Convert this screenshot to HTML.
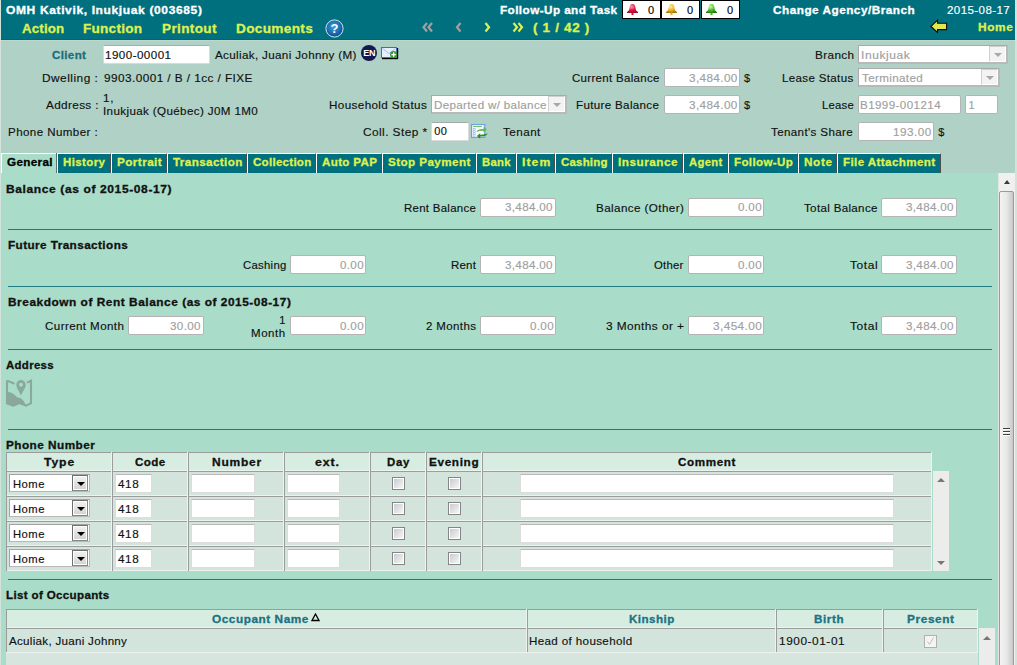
<!DOCTYPE html>
<html><head><meta charset="utf-8"><title>Client</title>
<style>html,body{margin:0;padding:0;overflow:hidden}body{width:1017px;height:665px;position:relative;font-family:"Liberation Sans",sans-serif}</style>
</head><body>
<div style="position:absolute;left:0px;top:0px;width:1017px;height:665px;background:#d3e3dc"></div>
<div style="position:absolute;left:1px;top:0px;width:1014px;height:39px;background:#00707f"></div>
<div style="position:absolute;left:1px;top:39px;width:1014px;height:1px;background:#006676"></div>
<div style="position:absolute;left:1px;top:40px;width:1014px;height:1px;background:#bcd8cc"></div>
<div style="position:absolute;left:1px;top:41px;width:1014px;height:132px;background:#b0d1c5"></div>
<div style="position:absolute;left:1px;top:173px;width:997px;height:492px;background:#a9dcc9"></div>
<div style="position:absolute;left:103px;top:45px;width:105px;height:17px;background:#fff;border:1px solid #dadada;border-top-color:#a9a9a9;border-radius:2px"></div>
<div style="position:absolute;left:664px;top:68px;width:74px;height:17px;background:#fff;border:1px solid #b4b4b4;border-radius:2px"></div>
<div style="position:absolute;left:664px;top:95px;width:74px;height:17px;background:#fff;border:1px solid #b4b4b4;border-radius:2px"></div>
<div style="position:absolute;left:858px;top:95px;width:101px;height:17px;background:#fff;border:1px solid #b4b4b4;border-radius:2px"></div>
<div style="position:absolute;left:965px;top:95px;width:31px;height:17px;background:#fff;border:1px solid #b4b4b4;border-radius:2px"></div>
<div style="position:absolute;left:858px;top:122px;width:74px;height:17px;background:#fff;border:1px solid #b4b4b4;border-radius:2px"></div>
<div style="position:absolute;left:431px;top:122px;width:36px;height:17px;background:#fff;border:1px solid #dadada;border-top-color:#a9a9a9;border-radius:2px"></div>
<div style="position:absolute;left:858px;top:45px;width:147px;height:16px;background:#fff;border:1px solid #a9a9a9;border-right:2px solid #b9b9b9;border-bottom:2px solid #b9b9b9"></div>
<div style="position:absolute;left:989px;top:46px;width:15px;height:14px;background:#f3f3f3;border:1px solid #d0d0d0;border-right-color:#fff;border-bottom-color:#fff"></div>
<div style="position:absolute;left:993.5px;top:52.5px;width:0;height:0;border-left:4px solid transparent;border-right:4px solid transparent;border-top:4px solid #a8a8a8"></div>
<div style="position:absolute;left:858px;top:68px;width:139px;height:16px;background:#fff;border:1px solid #a9a9a9;border-right:2px solid #b9b9b9;border-bottom:2px solid #b9b9b9"></div>
<div style="position:absolute;left:981px;top:69px;width:15px;height:14px;background:#f3f3f3;border:1px solid #d0d0d0;border-right-color:#fff;border-bottom-color:#fff"></div>
<div style="position:absolute;left:985.5px;top:75.5px;width:0;height:0;border-left:4px solid transparent;border-right:4px solid transparent;border-top:4px solid #a8a8a8"></div>
<div style="position:absolute;left:431px;top:95px;width:133px;height:16px;background:#fff;border:1px solid #a9a9a9;border-right:2px solid #b9b9b9;border-bottom:2px solid #b9b9b9"></div>
<div style="position:absolute;left:548px;top:96px;width:15px;height:14px;background:#f3f3f3;border:1px solid #d0d0d0;border-right-color:#fff;border-bottom-color:#fff"></div>
<div style="position:absolute;left:552.5px;top:102.5px;width:0;height:0;border-left:4px solid transparent;border-right:4px solid transparent;border-top:4px solid #a8a8a8"></div>
<div style="position:absolute;left:1px;top:153px;width:56px;height:20px;background:#a9dcc9;border-top:1px solid #fff;border-left:1px solid #fff;box-sizing:border-box"></div>
<div style="position:absolute;left:56px;top:153px;width:1px;height:20px;background:#607070"></div>
<div style="position:absolute;left:57px;top:153px;width:54px;height:20px;background:#00707f;border-top:1px solid #fff;border-left:1px solid #fff;border-right:1px solid #4a5050;box-sizing:border-box"></div>
<div style="position:absolute;left:111px;top:153px;width:56px;height:20px;background:#00707f;border-top:1px solid #fff;border-left:1px solid #fff;border-right:1px solid #4a5050;box-sizing:border-box"></div>
<div style="position:absolute;left:167px;top:153px;width:80px;height:20px;background:#00707f;border-top:1px solid #fff;border-left:1px solid #fff;border-right:1px solid #4a5050;box-sizing:border-box"></div>
<div style="position:absolute;left:247px;top:153px;width:69px;height:20px;background:#00707f;border-top:1px solid #fff;border-left:1px solid #fff;border-right:1px solid #4a5050;box-sizing:border-box"></div>
<div style="position:absolute;left:316px;top:153px;width:66px;height:20px;background:#00707f;border-top:1px solid #fff;border-left:1px solid #fff;border-right:1px solid #4a5050;box-sizing:border-box"></div>
<div style="position:absolute;left:382px;top:153px;width:94px;height:20px;background:#00707f;border-top:1px solid #fff;border-left:1px solid #fff;border-right:1px solid #4a5050;box-sizing:border-box"></div>
<div style="position:absolute;left:476px;top:153px;width:40px;height:20px;background:#00707f;border-top:1px solid #fff;border-left:1px solid #fff;border-right:1px solid #4a5050;box-sizing:border-box"></div>
<div style="position:absolute;left:516px;top:153px;width:39px;height:20px;background:#00707f;border-top:1px solid #fff;border-left:1px solid #fff;border-right:1px solid #4a5050;box-sizing:border-box"></div>
<div style="position:absolute;left:555px;top:153px;width:57px;height:20px;background:#00707f;border-top:1px solid #fff;border-left:1px solid #fff;border-right:1px solid #4a5050;box-sizing:border-box"></div>
<div style="position:absolute;left:612px;top:153px;width:71px;height:20px;background:#00707f;border-top:1px solid #fff;border-left:1px solid #fff;border-right:1px solid #4a5050;box-sizing:border-box"></div>
<div style="position:absolute;left:683px;top:153px;width:45px;height:20px;background:#00707f;border-top:1px solid #fff;border-left:1px solid #fff;border-right:1px solid #4a5050;box-sizing:border-box"></div>
<div style="position:absolute;left:728px;top:153px;width:70px;height:20px;background:#00707f;border-top:1px solid #fff;border-left:1px solid #fff;border-right:1px solid #4a5050;box-sizing:border-box"></div>
<div style="position:absolute;left:798px;top:153px;width:39px;height:20px;background:#00707f;border-top:1px solid #fff;border-left:1px solid #fff;border-right:1px solid #4a5050;box-sizing:border-box"></div>
<div style="position:absolute;left:837px;top:153px;width:104px;height:20px;background:#00707f;border-top:1px solid #fff;border-left:1px solid #fff;border-right:1px solid #4a5050;box-sizing:border-box"></div>
<div style="position:absolute;left:8px;top:229px;width:984px;height:1px;background:#1f7a84"></div>
<div style="position:absolute;left:8px;top:286px;width:984px;height:1px;background:#1f7a84"></div>
<div style="position:absolute;left:8px;top:349px;width:984px;height:1px;background:#1f7a84"></div>
<div style="position:absolute;left:8px;top:429px;width:984px;height:1px;background:#1f7a84"></div>
<div style="position:absolute;left:8px;top:579px;width:984px;height:1px;background:#1f7a84"></div>
<div style="position:absolute;left:480px;top:198px;width:74px;height:17px;background:#fff;border:1px solid #b4b4b4;border-radius:2px"></div>
<div style="position:absolute;left:688px;top:198px;width:74px;height:17px;background:#fff;border:1px solid #b4b4b4;border-radius:2px"></div>
<div style="position:absolute;left:881px;top:198px;width:74px;height:17px;background:#fff;border:1px solid #b4b4b4;border-radius:2px"></div>
<div style="position:absolute;left:290px;top:255px;width:74px;height:17px;background:#fff;border:1px solid #b4b4b4;border-radius:2px"></div>
<div style="position:absolute;left:480px;top:255px;width:74px;height:17px;background:#fff;border:1px solid #b4b4b4;border-radius:2px"></div>
<div style="position:absolute;left:688px;top:255px;width:74px;height:17px;background:#fff;border:1px solid #b4b4b4;border-radius:2px"></div>
<div style="position:absolute;left:881px;top:255px;width:74px;height:17px;background:#fff;border:1px solid #b4b4b4;border-radius:2px"></div>
<div style="position:absolute;left:128px;top:316px;width:74px;height:17px;background:#fff;border:1px solid #b4b4b4;border-radius:2px"></div>
<div style="position:absolute;left:290px;top:316px;width:74px;height:17px;background:#fff;border:1px solid #b4b4b4;border-radius:2px"></div>
<div style="position:absolute;left:480px;top:316px;width:74px;height:17px;background:#fff;border:1px solid #b4b4b4;border-radius:2px"></div>
<div style="position:absolute;left:688px;top:316px;width:74px;height:17px;background:#fff;border:1px solid #b4b4b4;border-radius:2px"></div>
<div style="position:absolute;left:881px;top:316px;width:74px;height:17px;background:#fff;border:1px solid #b4b4b4;border-radius:2px"></div>
<div style="position:absolute;left:6px;top:452px;width:926px;height:19px;background:#d8ede1"></div>
<div style="position:absolute;left:6px;top:471px;width:926px;height:100px;background:#d3e4dd"></div>
<div style="position:absolute;left:6px;top:452px;width:926px;height:1px;background:#9c9c9c"></div>
<div style="position:absolute;left:6px;top:470px;width:926px;height:1px;background:#eef3f0"></div>
<div style="position:absolute;left:6px;top:471px;width:926px;height:1px;background:#9c9c9c"></div>
<div style="position:absolute;left:6px;top:495px;width:926px;height:1px;background:#eef3f0"></div>
<div style="position:absolute;left:6px;top:496px;width:926px;height:1px;background:#9c9c9c"></div>
<div style="position:absolute;left:6px;top:520px;width:926px;height:1px;background:#eef3f0"></div>
<div style="position:absolute;left:6px;top:521px;width:926px;height:1px;background:#9c9c9c"></div>
<div style="position:absolute;left:6px;top:545px;width:926px;height:1px;background:#eef3f0"></div>
<div style="position:absolute;left:6px;top:546px;width:926px;height:1px;background:#9c9c9c"></div>
<div style="position:absolute;left:6px;top:570px;width:926px;height:1px;background:#eef3f0"></div>
<div style="position:absolute;left:6px;top:452px;width:1px;height:119px;background:#9c9c9c"></div>
<div style="position:absolute;left:112px;top:452px;width:1px;height:119px;background:#9c9c9c"></div>
<div style="position:absolute;left:111px;top:452px;width:1px;height:119px;background:#eef3f0"></div>
<div style="position:absolute;left:188px;top:452px;width:1px;height:119px;background:#9c9c9c"></div>
<div style="position:absolute;left:187px;top:452px;width:1px;height:119px;background:#eef3f0"></div>
<div style="position:absolute;left:284px;top:452px;width:1px;height:119px;background:#9c9c9c"></div>
<div style="position:absolute;left:283px;top:452px;width:1px;height:119px;background:#eef3f0"></div>
<div style="position:absolute;left:370px;top:452px;width:1px;height:119px;background:#9c9c9c"></div>
<div style="position:absolute;left:369px;top:452px;width:1px;height:119px;background:#eef3f0"></div>
<div style="position:absolute;left:426px;top:452px;width:1px;height:119px;background:#9c9c9c"></div>
<div style="position:absolute;left:425px;top:452px;width:1px;height:119px;background:#eef3f0"></div>
<div style="position:absolute;left:482px;top:452px;width:1px;height:119px;background:#9c9c9c"></div>
<div style="position:absolute;left:481px;top:452px;width:1px;height:119px;background:#eef3f0"></div>
<div style="position:absolute;left:931px;top:452px;width:1px;height:119px;background:#eef3f0"></div>
<div style="position:absolute;left:9px;top:474px;width:79px;height:16px;background:#fff;border:1px solid #a4a4a4;border-right-color:#b8b8b8;border-bottom-color:#b8b8b8"></div>
<div style="position:absolute;left:72px;top:475px;width:14px;height:14px;border:1px solid #6e6e6e;border-right-color:#888;border-bottom-color:#888;background:linear-gradient(#f2f2f2,#d2d2d2);box-shadow:inset 0 0 0 1px #fff"></div>
<div style="position:absolute;left:77px;top:482px;width:0;height:0;border-left:4px solid transparent;border-right:4px solid transparent;border-top:4px solid #000"></div>
<div style="position:absolute;left:115px;top:474px;width:35px;height:17px;background:#fff;border:1px solid #dcdcdc;border-top-color:#b8b8b8;border-radius:1px"></div>
<div style="position:absolute;left:191px;top:474px;width:62px;height:17px;background:#fff;border:1px solid #dcdcdc;border-top-color:#b8b8b8;border-radius:1px"></div>
<div style="position:absolute;left:287px;top:474px;width:51px;height:17px;background:#fff;border:1px solid #dcdcdc;border-top-color:#b8b8b8;border-radius:1px"></div>
<div style="position:absolute;left:520px;top:474px;width:372px;height:17px;background:#fff;border:1px solid #dcdcdc;border-top-color:#b8b8b8;border-radius:1px"></div>
<div style="position:absolute;left:392px;top:477px;width:11px;height:11px;border:1px solid #858585;background:linear-gradient(135deg,#c4c6cc,#fbfbfb);box-shadow:inset 0 0 0 1px #fff"></div>
<div style="position:absolute;left:448px;top:477px;width:11px;height:11px;border:1px solid #858585;background:linear-gradient(135deg,#c4c6cc,#fbfbfb);box-shadow:inset 0 0 0 1px #fff"></div>
<div style="position:absolute;left:9px;top:499px;width:79px;height:16px;background:#fff;border:1px solid #a4a4a4;border-right-color:#b8b8b8;border-bottom-color:#b8b8b8"></div>
<div style="position:absolute;left:72px;top:500px;width:14px;height:14px;border:1px solid #6e6e6e;border-right-color:#888;border-bottom-color:#888;background:linear-gradient(#f2f2f2,#d2d2d2);box-shadow:inset 0 0 0 1px #fff"></div>
<div style="position:absolute;left:77px;top:507px;width:0;height:0;border-left:4px solid transparent;border-right:4px solid transparent;border-top:4px solid #000"></div>
<div style="position:absolute;left:115px;top:499px;width:35px;height:17px;background:#fff;border:1px solid #dcdcdc;border-top-color:#b8b8b8;border-radius:1px"></div>
<div style="position:absolute;left:191px;top:499px;width:62px;height:17px;background:#fff;border:1px solid #dcdcdc;border-top-color:#b8b8b8;border-radius:1px"></div>
<div style="position:absolute;left:287px;top:499px;width:51px;height:17px;background:#fff;border:1px solid #dcdcdc;border-top-color:#b8b8b8;border-radius:1px"></div>
<div style="position:absolute;left:520px;top:499px;width:372px;height:17px;background:#fff;border:1px solid #dcdcdc;border-top-color:#b8b8b8;border-radius:1px"></div>
<div style="position:absolute;left:392px;top:502px;width:11px;height:11px;border:1px solid #858585;background:linear-gradient(135deg,#c4c6cc,#fbfbfb);box-shadow:inset 0 0 0 1px #fff"></div>
<div style="position:absolute;left:448px;top:502px;width:11px;height:11px;border:1px solid #858585;background:linear-gradient(135deg,#c4c6cc,#fbfbfb);box-shadow:inset 0 0 0 1px #fff"></div>
<div style="position:absolute;left:9px;top:524px;width:79px;height:16px;background:#fff;border:1px solid #a4a4a4;border-right-color:#b8b8b8;border-bottom-color:#b8b8b8"></div>
<div style="position:absolute;left:72px;top:525px;width:14px;height:14px;border:1px solid #6e6e6e;border-right-color:#888;border-bottom-color:#888;background:linear-gradient(#f2f2f2,#d2d2d2);box-shadow:inset 0 0 0 1px #fff"></div>
<div style="position:absolute;left:77px;top:532px;width:0;height:0;border-left:4px solid transparent;border-right:4px solid transparent;border-top:4px solid #000"></div>
<div style="position:absolute;left:115px;top:524px;width:35px;height:17px;background:#fff;border:1px solid #dcdcdc;border-top-color:#b8b8b8;border-radius:1px"></div>
<div style="position:absolute;left:191px;top:524px;width:62px;height:17px;background:#fff;border:1px solid #dcdcdc;border-top-color:#b8b8b8;border-radius:1px"></div>
<div style="position:absolute;left:287px;top:524px;width:51px;height:17px;background:#fff;border:1px solid #dcdcdc;border-top-color:#b8b8b8;border-radius:1px"></div>
<div style="position:absolute;left:520px;top:524px;width:372px;height:17px;background:#fff;border:1px solid #dcdcdc;border-top-color:#b8b8b8;border-radius:1px"></div>
<div style="position:absolute;left:392px;top:527px;width:11px;height:11px;border:1px solid #858585;background:linear-gradient(135deg,#c4c6cc,#fbfbfb);box-shadow:inset 0 0 0 1px #fff"></div>
<div style="position:absolute;left:448px;top:527px;width:11px;height:11px;border:1px solid #858585;background:linear-gradient(135deg,#c4c6cc,#fbfbfb);box-shadow:inset 0 0 0 1px #fff"></div>
<div style="position:absolute;left:9px;top:549px;width:79px;height:16px;background:#fff;border:1px solid #a4a4a4;border-right-color:#b8b8b8;border-bottom-color:#b8b8b8"></div>
<div style="position:absolute;left:72px;top:550px;width:14px;height:14px;border:1px solid #6e6e6e;border-right-color:#888;border-bottom-color:#888;background:linear-gradient(#f2f2f2,#d2d2d2);box-shadow:inset 0 0 0 1px #fff"></div>
<div style="position:absolute;left:77px;top:557px;width:0;height:0;border-left:4px solid transparent;border-right:4px solid transparent;border-top:4px solid #000"></div>
<div style="position:absolute;left:115px;top:549px;width:35px;height:17px;background:#fff;border:1px solid #dcdcdc;border-top-color:#b8b8b8;border-radius:1px"></div>
<div style="position:absolute;left:191px;top:549px;width:62px;height:17px;background:#fff;border:1px solid #dcdcdc;border-top-color:#b8b8b8;border-radius:1px"></div>
<div style="position:absolute;left:287px;top:549px;width:51px;height:17px;background:#fff;border:1px solid #dcdcdc;border-top-color:#b8b8b8;border-radius:1px"></div>
<div style="position:absolute;left:520px;top:549px;width:372px;height:17px;background:#fff;border:1px solid #dcdcdc;border-top-color:#b8b8b8;border-radius:1px"></div>
<div style="position:absolute;left:392px;top:552px;width:11px;height:11px;border:1px solid #858585;background:linear-gradient(135deg,#c4c6cc,#fbfbfb);box-shadow:inset 0 0 0 1px #fff"></div>
<div style="position:absolute;left:448px;top:552px;width:11px;height:11px;border:1px solid #858585;background:linear-gradient(135deg,#c4c6cc,#fbfbfb);box-shadow:inset 0 0 0 1px #fff"></div>
<div style="position:absolute;left:933px;top:471px;width:16px;height:100px;background:#ececec"></div>
<div style="position:absolute;left:937px;top:478px;width:0;height:0;border-left:4px solid transparent;border-right:4px solid transparent;border-bottom:4px solid #777"></div>
<div style="position:absolute;left:937px;top:561px;width:0;height:0;border-left:4px solid transparent;border-right:4px solid transparent;border-top:4px solid #777"></div>
<div style="position:absolute;left:6px;top:609px;width:972px;height:19px;background:#d8ede1"></div>
<div style="position:absolute;left:6px;top:628px;width:972px;height:24px;background:#d3e4dd"></div>
<div style="position:absolute;left:6px;top:652px;width:972px;height:13px;background:#d7e5df"></div>
<div style="position:absolute;left:6px;top:609px;width:972px;height:1px;background:#9c9c9c"></div>
<div style="position:absolute;left:6px;top:627px;width:972px;height:1px;background:#eef3f0"></div>
<div style="position:absolute;left:6px;top:628px;width:972px;height:1px;background:#9c9c9c"></div>
<div style="position:absolute;left:6px;top:652px;width:972px;height:1px;background:#eef3f0"></div>
<div style="position:absolute;left:6px;top:609px;width:1px;height:43px;background:#9c9c9c"></div>
<div style="position:absolute;left:527px;top:609px;width:1px;height:43px;background:#9c9c9c"></div>
<div style="position:absolute;left:526px;top:609px;width:1px;height:43px;background:#eef3f0"></div>
<div style="position:absolute;left:776px;top:609px;width:1px;height:43px;background:#9c9c9c"></div>
<div style="position:absolute;left:775px;top:609px;width:1px;height:43px;background:#eef3f0"></div>
<div style="position:absolute;left:883px;top:609px;width:1px;height:43px;background:#9c9c9c"></div>
<div style="position:absolute;left:882px;top:609px;width:1px;height:43px;background:#eef3f0"></div>
<div style="position:absolute;left:977px;top:609px;width:1px;height:43px;background:#eef3f0"></div>
<svg style="position:absolute;left:311px;top:613px" width="9" height="9"><path d="M4.5 1 L8 7.5 L1 7.5 Z" fill="none" stroke="#000" stroke-width="1.3"/></svg>
<div style="position:absolute;left:924px;top:635px;width:11px;height:11px;border:1px solid #b0b0b0;background:#f4f4f4"></div>
<svg style="position:absolute;left:924px;top:635px" width="13" height="13"><path d="M3.5 6.5 L5.5 9.5 L9.5 2.5" fill="none" stroke="#c0c0c0" stroke-width="1"/></svg>
<div style="position:absolute;left:979px;top:628px;width:16px;height:37px;background:#ececec"></div>
<div style="position:absolute;left:983px;top:636px;width:0;height:0;border-left:4px solid transparent;border-right:4px solid transparent;border-bottom:4px solid #777"></div>
<div style="position:absolute;left:998px;top:173px;width:17px;height:492px;background:#f0f0f0;border-left:1px solid #e4e4e4;box-sizing:border-box"></div>
<div style="position:absolute;left:1004px;top:180px;width:0;height:0;border-left:3.5px solid transparent;border-right:3.5px solid transparent;border-bottom:4px solid #3a3a3a"></div>
<div style="position:absolute;left:999px;top:191px;width:15px;height:480px;box-sizing:border-box;border:1px solid #9a9a9a;border-radius:2px;background:linear-gradient(90deg,#f4f4f4,#e8e8e8 50%,#c8c8c8)"></div>
<div style="position:absolute;left:1003px;top:428px;width:7px;height:1px;background:#404040"></div>
<div style="position:absolute;left:1003px;top:429px;width:7px;height:1px;background:#fff"></div>
<div style="position:absolute;left:1003px;top:431px;width:7px;height:1px;background:#404040"></div>
<div style="position:absolute;left:1003px;top:432px;width:7px;height:1px;background:#fff"></div>
<div style="position:absolute;left:1003px;top:434px;width:7px;height:1px;background:#404040"></div>
<div style="position:absolute;left:1003px;top:435px;width:7px;height:1px;background:#fff"></div>
<svg style="position:absolute;left:325px;top:19px" width="19" height="19"><defs><radialGradient id="hg" cx="45%" cy="40%" r="60%"><stop offset="0" stop-color="#3aa0dc"/><stop offset="1" stop-color="#0a4f98"/></radialGradient></defs><circle cx="9.5" cy="9.5" r="8.6" fill="url(#hg)" stroke="#cfe6f2" stroke-width="1"/><text x="9.6" y="14.4" text-anchor="middle" font-family="Liberation Sans" font-weight="bold" font-size="13" fill="#fff">?</text></svg>
<svg style="position:absolute;left:361px;top:45px" width="17" height="17"><circle cx="8" cy="8" r="8" fill="#161650"/><text x="8.2" y="11.3" text-anchor="middle" font-family="Liberation Sans" font-weight="bold" font-size="9" letter-spacing="-0.3" fill="#fff">EN</text></svg>
<svg style="position:absolute;left:381px;top:46px" width="18" height="15"><rect x="0.5" y="1.5" width="15" height="10" fill="#e4efff" stroke="#3c70c8"/><path d="M1.5 2.5 L8 7.5 L14.5 2.5" stroke="#9fbfe8" fill="none"/><rect x="1" y="12" width="16" height="1.2" fill="#000"/><rect x="16" y="2" width="1.2" height="11" fill="#000"/><circle cx="12.6" cy="8.6" r="3.6" fill="#3a9a2e"/><rect x="12" y="6.4" width="1.3" height="4.4" fill="#fff"/><rect x="10.4" y="8" width="4.4" height="1.3" fill="#fff"/></svg>
<svg style="position:absolute;left:465px;top:118px" width="30" height="26"><rect x="6.6" y="6.6" width="13.2" height="12.8" fill="#fff" stroke="#6f9fe0" stroke-width="1.2"/><path d="M8 8.5 H17" stroke="#6cc46c" stroke-width="1"/><rect x="8" y="10" width="2.6" height="8.6" fill="#a8c4ee"/><rect x="8.8" y="11" width="1" height="1" fill="#fff"/><rect x="8.8" y="13" width="1" height="1" fill="#fff"/><rect x="8.8" y="15" width="1" height="1" fill="#fff"/><rect x="8.8" y="17" width="1" height="1" fill="#fff"/><path d="M11 14 C13 11.2 16 10.8 18.5 11.2 L18.5 8.8 L21.8 11.6 L18.5 14.4 L18.5 12.9 C16 12.7 13.5 13.2 11 14 Z" fill="#56bb56"/><path d="M22.8 15.6 C20.8 18.6 17.8 18.8 15.2 18.4 L15.2 20.8 L11.8 18 L15.2 15.2 L15.2 16.7 C17.6 16.9 20.2 16.4 22.8 15.6 Z" fill="#2a8c2a"/></svg>
<svg style="position:absolute;left:930px;top:19px" width="19" height="15"><path d="M1 7.4 L7.5 1.2 L7.5 4.3 L16.6 4.3 L16.6 10.6 L7.5 10.6 L7.5 13.5 Z" fill="#dfe94f" stroke="#1a0a0a" stroke-width="1.1"/></svg>
<div style="position:absolute;left:622px;top:0px;width:37px;height:17px;background:#fff;border:1px solid #000"></div>
<svg style="position:absolute;left:626px;top:3px" width="13" height="12"><defs><radialGradient id="bg0" cx="40%" cy="30%" r="70%"><stop offset="0" stop-color="#ff9ab0"/><stop offset="0.6" stop-color="#e0103c"/><stop offset="1" stop-color="#a0102a"/></radialGradient></defs><path d="M6.5 1 C4.3 1 3.7 3 3.5 5 C3.3 7 2.6 8 1 9.1 L1 10 H12 V9.1 C10.4 8 9.7 7 9.5 5 C9.3 3 8.7 1 6.5 1 Z" fill="url(#bg0)"/><circle cx="6.5" cy="10.9" r="1.2" fill="#e0103c"/></svg>
<div style="position:absolute;left:661px;top:0px;width:37px;height:17px;background:#fff;border:1px solid #000"></div>
<svg style="position:absolute;left:665px;top:3px" width="13" height="12"><defs><radialGradient id="bg1" cx="40%" cy="30%" r="70%"><stop offset="0" stop-color="#fff0a0"/><stop offset="0.6" stop-color="#e8b020"/><stop offset="1" stop-color="#a87810"/></radialGradient></defs><path d="M6.5 1 C4.3 1 3.7 3 3.5 5 C3.3 7 2.6 8 1 9.1 L1 10 H12 V9.1 C10.4 8 9.7 7 9.5 5 C9.3 3 8.7 1 6.5 1 Z" fill="url(#bg1)"/><circle cx="6.5" cy="10.9" r="1.2" fill="#e8b020"/></svg>
<div style="position:absolute;left:701px;top:0px;width:37px;height:17px;background:#fff;border:1px solid #000"></div>
<svg style="position:absolute;left:705px;top:3px" width="13" height="12"><defs><radialGradient id="bg2" cx="40%" cy="30%" r="70%"><stop offset="0" stop-color="#c8ffa8"/><stop offset="0.6" stop-color="#48b828"/><stop offset="1" stop-color="#2a7a18"/></radialGradient></defs><path d="M6.5 1 C4.3 1 3.7 3 3.5 5 C3.3 7 2.6 8 1 9.1 L1 10 H12 V9.1 C10.4 8 9.7 7 9.5 5 C9.3 3 8.7 1 6.5 1 Z" fill="url(#bg2)"/><circle cx="6.5" cy="10.9" r="1.2" fill="#48b828"/></svg>
<svg style="position:absolute;left:422px;top:22px" width="12" height="11"><path d="M5 1 L1.5 5.2 L5 9.5 M10 1 L6.5 5.2 L10 9.5" fill="none" stroke="#a0a0a0" stroke-width="2.2"/></svg>
<svg style="position:absolute;left:455px;top:22px" width="8" height="11"><path d="M5.5 1 L2 5.2 L5.5 9.5" fill="none" stroke="#a0a0a0" stroke-width="2.2"/></svg>
<svg style="position:absolute;left:484px;top:22px" width="8" height="11"><path d="M1.5 1 L5 5.2 L1.5 9.5" fill="none" stroke="#def04e" stroke-width="2.2"/></svg>
<svg style="position:absolute;left:512px;top:22px" width="12" height="11"><path d="M1.5 1 L5 5.2 L1.5 9.5 M6.5 1 L10 5.2 L6.5 9.5" fill="none" stroke="#def04e" stroke-width="2.2"/></svg>
<svg style="position:absolute;left:0;top:372px" width="40" height="40"><g fill="none" stroke="#8aa89e" stroke-width="2.1" stroke-linejoin="miter"><path d="M7 8.6 L7 31.2 L13 33.6 L19.5 31 L26 33.6 L31 31.2 L31 8.6 L27 10.6"/><path d="M7 8.6 L14.5 11.8"/></g><path d="M6 19.6 C10 20 14 21.5 17 25.2 C20.5 25.6 23.5 27.5 25 31.6 L26 33.6 L19.5 31 L13 33.6 L6 31.2 Z" fill="#8aa89e"/><path d="M21 24.5 C19.2 20 15.2 16.5 15.2 12.7 A5.8 5.8 0 1 1 26.8 12.7 C26.8 16.5 22.8 20 21 24.5 Z" fill="#a9dcc9"/><path fill-rule="evenodd" d="M21 23.4 C19.5 19.5 16.3 16.2 16.3 12.7 A4.7 4.7 0 1 1 25.7 12.7 C25.7 16.2 22.5 19.5 21 23.4 Z M21 10.8 A1.9 1.9 0 1 0 21.01 10.8 Z" fill="#8aa89e"/></svg>
<span style="position:absolute;left:6.00px;top:5px;white-space:nowrap;font-family:'Liberation Sans',sans-serif;font-size:11px;font-weight:bold;line-height:11px;letter-spacing:0.578px;color:#fff;transform:scaleX(1.0922);transform-origin:0 0;-webkit-text-stroke:0.3px currentColor">OMH Kativik, Inukjuak (003685)</span>
<span style="position:absolute;left:21.70px;top:22px;white-space:nowrap;font-family:'Liberation Sans',sans-serif;font-size:13px;font-weight:bold;line-height:13px;letter-spacing:0.18px;color:#def04e;transform:scaleX(1.0195);transform-origin:0 0;-webkit-text-stroke:0.3px currentColor">Action</span>
<span style="position:absolute;left:83.36px;top:22px;white-space:nowrap;font-family:'Liberation Sans',sans-serif;font-size:13px;font-weight:bold;line-height:13px;letter-spacing:0.243px;color:#def04e;transform:scaleX(1.0436);transform-origin:0 0;-webkit-text-stroke:0.3px currentColor">Function</span>
<span style="position:absolute;left:161.76px;top:22px;white-space:nowrap;font-family:'Liberation Sans',sans-serif;font-size:13px;font-weight:bold;line-height:13px;letter-spacing:0.364px;color:#def04e;transform:scaleX(1.0404);transform-origin:0 0;-webkit-text-stroke:0.3px currentColor">Printout</span>
<span style="position:absolute;left:236.45px;top:22px;white-space:nowrap;font-family:'Liberation Sans',sans-serif;font-size:13px;font-weight:bold;line-height:13px;letter-spacing:0.331px;color:#def04e;transform:scaleX(1.0458);transform-origin:0 0;-webkit-text-stroke:0.3px currentColor">Documents</span>
<span style="position:absolute;left:500.20px;top:5px;white-space:nowrap;font-family:'Liberation Sans',sans-serif;font-size:11px;font-weight:bold;line-height:11px;letter-spacing:0.412px;color:#fff;transform:scaleX(1.0636);transform-origin:0 0;-webkit-text-stroke:0.3px currentColor">Follow-Up and Task</span>
<span style="position:absolute;left:773.10px;top:5px;white-space:nowrap;font-family:'Liberation Sans',sans-serif;font-size:11px;font-weight:bold;line-height:11px;letter-spacing:0.474px;color:#fff;transform:scaleX(1.0682);transform-origin:0 0;-webkit-text-stroke:0.3px currentColor">Change Agency/Branch</span>
<span style="position:absolute;left:946.50px;top:5px;white-space:nowrap;font-family:'Liberation Sans',sans-serif;font-size:11px;font-weight:normal;line-height:11px;letter-spacing:0.389px;color:#fff;transform:scaleX(1.0500);transform-origin:0 0;-webkit-text-stroke:0.15px currentColor">2015-08-17</span>
<span style="position:absolute;left:977.80px;top:22px;white-space:nowrap;font-family:'Liberation Sans',sans-serif;font-size:11px;font-weight:bold;line-height:11px;letter-spacing:0.583px;color:#def04e;transform:scaleX(1.0781);transform-origin:0 0;-webkit-text-stroke:0.3px currentColor">Home</span>
<span style="position:absolute;left:533.30px;top:22px;white-space:nowrap;font-family:'Liberation Sans',sans-serif;font-size:12px;font-weight:bold;line-height:12px;letter-spacing:0.611px;color:#def04e;transform:scaleX(1.1200);transform-origin:0 0;-webkit-text-stroke:0.3px currentColor">( 1 / 42 )</span>
<span style="position:absolute;left:51.90px;top:50px;white-space:nowrap;font-family:'Liberation Sans',sans-serif;font-size:11px;font-weight:bold;line-height:11px;letter-spacing:0.36px;color:#1b6f7e;transform:scaleX(1.0485);transform-origin:0 0;-webkit-text-stroke:0.3px currentColor">Client</span>
<span style="position:absolute;left:215.10px;top:50px;white-space:nowrap;font-family:'Liberation Sans',sans-serif;font-size:11px;font-weight:normal;line-height:11px;letter-spacing:0.312px;color:#111;transform:scaleX(1.0602);transform-origin:0 0;-webkit-text-stroke:0.15px currentColor">Aculiak, Juani Johnny (M)</span>
<span style="position:absolute;left:42.22px;top:73px;white-space:nowrap;font-family:'Liberation Sans',sans-serif;font-size:11px;font-weight:normal;line-height:11px;letter-spacing:0.444px;color:#111;transform:scaleX(1.0800);transform-origin:0 0;-webkit-text-stroke:0.15px currentColor">Dwelling :</span>
<span style="position:absolute;left:104.00px;top:73px;white-space:nowrap;font-family:'Liberation Sans',sans-serif;font-size:11px;font-weight:normal;line-height:11px;letter-spacing:0.4px;color:#111;transform:scaleX(1.0725);transform-origin:0 0;-webkit-text-stroke:0.15px currentColor">9903.0001 / B / 1cc / FIXE</span>
<span style="position:absolute;left:46.00px;top:100px;white-space:nowrap;font-family:'Liberation Sans',sans-serif;font-size:11px;font-weight:normal;line-height:11px;letter-spacing:0.331px;color:#111;transform:scaleX(1.0687);transform-origin:0 0;-webkit-text-stroke:0.15px currentColor">Address :</span>
<span style="position:absolute;left:103.04px;top:93px;white-space:nowrap;font-family:'Liberation Sans',sans-serif;font-size:11px;font-weight:normal;line-height:11px;letter-spacing:0.75px;color:#111;transform:scaleX(1.0625);transform-origin:0 0;-webkit-text-stroke:0.15px currentColor">1,</span>
<span style="position:absolute;left:102.95px;top:106px;white-space:nowrap;font-family:'Liberation Sans',sans-serif;font-size:11px;font-weight:normal;line-height:11px;letter-spacing:0.354px;color:#111;transform:scaleX(1.0548);transform-origin:0 0;-webkit-text-stroke:0.15px currentColor">Inukjuak (Québec) J0M 1M0</span>
<span style="position:absolute;left:7.95px;top:127px;white-space:nowrap;font-family:'Liberation Sans',sans-serif;font-size:11px;font-weight:normal;line-height:11px;letter-spacing:0.396px;color:#111;transform:scaleX(1.0512);transform-origin:0 0;-webkit-text-stroke:0.15px currentColor">Phone Number :</span>
<span style="position:absolute;left:328.74px;top:100px;white-space:nowrap;font-family:'Liberation Sans',sans-serif;font-size:11px;font-weight:normal;line-height:11px;letter-spacing:0.353px;color:#111;transform:scaleX(1.0615);transform-origin:0 0;-webkit-text-stroke:0.15px currentColor">Household Status</span>
<span style="position:absolute;left:362.70px;top:127px;white-space:nowrap;font-family:'Liberation Sans',sans-serif;font-size:11px;font-weight:normal;line-height:11px;letter-spacing:0.395px;color:#111;transform:scaleX(1.0797);transform-origin:0 0;-webkit-text-stroke:0.15px currentColor">Coll. Step *</span>
<span style="position:absolute;left:503.40px;top:127px;white-space:nowrap;font-family:'Liberation Sans',sans-serif;font-size:11px;font-weight:normal;line-height:11px;letter-spacing:0.42px;color:#111;transform:scaleX(1.0629);transform-origin:0 0;-webkit-text-stroke:0.15px currentColor">Tenant</span>
<span style="position:absolute;left:571.90px;top:73px;white-space:nowrap;font-family:'Liberation Sans',sans-serif;font-size:11px;font-weight:normal;line-height:11px;letter-spacing:0.307px;color:#111;transform:scaleX(1.0429);transform-origin:0 0;-webkit-text-stroke:0.15px currentColor">Current Balance</span>
<span style="position:absolute;left:576.25px;top:100px;white-space:nowrap;font-family:'Liberation Sans',sans-serif;font-size:11px;font-weight:normal;line-height:11px;letter-spacing:0.315px;color:#111;transform:scaleX(1.0538);transform-origin:0 0;-webkit-text-stroke:0.15px currentColor">Future Balance</span>
<span style="position:absolute;left:744.00px;top:73px;white-space:nowrap;font-family:'Liberation Sans',sans-serif;font-size:11px;font-weight:normal;line-height:11px;letter-spacing:0.0px;color:#111;transform:scaleX(1.0000);transform-origin:0 0;-webkit-text-stroke:0.15px currentColor">$</span>
<span style="position:absolute;left:744.00px;top:100px;white-space:nowrap;font-family:'Liberation Sans',sans-serif;font-size:11px;font-weight:normal;line-height:11px;letter-spacing:0.0px;color:#111;transform:scaleX(1.0000);transform-origin:0 0;-webkit-text-stroke:0.15px currentColor">$</span>
<span style="position:absolute;left:815.03px;top:50px;white-space:nowrap;font-family:'Liberation Sans',sans-serif;font-size:11px;font-weight:normal;line-height:11px;letter-spacing:0.34px;color:#111;transform:scaleX(1.0686);transform-origin:0 0;-webkit-text-stroke:0.15px currentColor">Branch</span>
<span style="position:absolute;left:782.15px;top:73px;white-space:nowrap;font-family:'Liberation Sans',sans-serif;font-size:11px;font-weight:normal;line-height:11px;letter-spacing:0.332px;color:#111;transform:scaleX(1.0493);transform-origin:0 0;-webkit-text-stroke:0.15px currentColor">Lease Status</span>
<span style="position:absolute;left:821.67px;top:100px;white-space:nowrap;font-family:'Liberation Sans',sans-serif;font-size:11px;font-weight:normal;line-height:11px;letter-spacing:0.225px;color:#111;transform:scaleX(1.0267);transform-origin:0 0;-webkit-text-stroke:0.15px currentColor">Lease</span>
<span style="position:absolute;left:771.40px;top:127px;white-space:nowrap;font-family:'Liberation Sans',sans-serif;font-size:11px;font-weight:normal;line-height:11px;letter-spacing:0.35px;color:#111;transform:scaleX(1.0526);transform-origin:0 0;-webkit-text-stroke:0.15px currentColor">Tenant's Share</span>
<span style="position:absolute;left:938.20px;top:127px;white-space:nowrap;font-family:'Liberation Sans',sans-serif;font-size:11px;font-weight:normal;line-height:11px;letter-spacing:0.0px;color:#111;transform:scaleX(1.0000);transform-origin:0 0;-webkit-text-stroke:0.15px currentColor">$</span>
<span style="position:absolute;left:105.34px;top:50px;white-space:nowrap;font-family:'Liberation Sans',sans-serif;font-size:11px;font-weight:normal;line-height:11px;letter-spacing:0.417px;color:#111;transform:scaleX(1.0574);transform-origin:0 0;-webkit-text-stroke:0.15px currentColor">1900-00001</span>
<span style="position:absolute;left:689.00px;top:73px;white-space:nowrap;font-family:'Liberation Sans',sans-serif;font-size:11px;font-weight:normal;line-height:11px;letter-spacing:0.357px;color:#a0a0a0;transform:scaleX(1.0667);transform-origin:0 0;-webkit-text-stroke:0.15px currentColor">3,484.00</span>
<span style="position:absolute;left:689.00px;top:100px;white-space:nowrap;font-family:'Liberation Sans',sans-serif;font-size:11px;font-weight:normal;line-height:11px;letter-spacing:0.357px;color:#a0a0a0;transform:scaleX(1.0667);transform-origin:0 0;-webkit-text-stroke:0.15px currentColor">3,484.00</span>
<span style="position:absolute;left:860.05px;top:100px;white-space:nowrap;font-family:'Liberation Sans',sans-serif;font-size:11px;font-weight:normal;line-height:11px;letter-spacing:0.405px;color:#a0a0a0;transform:scaleX(1.0513);transform-origin:0 0;-webkit-text-stroke:0.15px currentColor">B1999-001214</span>
<span style="position:absolute;left:968.50px;top:100px;white-space:nowrap;font-family:'Liberation Sans',sans-serif;font-size:11px;font-weight:normal;line-height:11px;letter-spacing:0.0px;color:#a0a0a0;transform:scaleX(1.0000);transform-origin:0 0;-webkit-text-stroke:0.15px currentColor">1</span>
<span style="position:absolute;left:892.93px;top:127px;white-space:nowrap;font-family:'Liberation Sans',sans-serif;font-size:11px;font-weight:normal;line-height:11px;letter-spacing:0.43px;color:#a0a0a0;transform:scaleX(1.0657);transform-origin:0 0;-webkit-text-stroke:0.15px currentColor">193.00</span>
<span style="position:absolute;left:434.20px;top:126px;white-space:nowrap;font-family:'Liberation Sans',sans-serif;font-size:11px;font-weight:normal;line-height:11px;letter-spacing:0.5px;color:#111;transform:scaleX(1.0000);transform-origin:0 0;-webkit-text-stroke:0.15px currentColor">00</span>
<span style="position:absolute;left:860.71px;top:50px;white-space:nowrap;font-family:'Liberation Sans',sans-serif;font-size:11px;font-weight:normal;line-height:11px;letter-spacing:0.557px;color:#a0a0a0;transform:scaleX(1.0864);transform-origin:0 0;-webkit-text-stroke:0.15px currentColor">Inukjuak</span>
<span style="position:absolute;left:862.30px;top:73px;white-space:nowrap;font-family:'Liberation Sans',sans-serif;font-size:11px;font-weight:normal;line-height:11px;letter-spacing:0.344px;color:#a0a0a0;transform:scaleX(1.0561);transform-origin:0 0;-webkit-text-stroke:0.15px currentColor">Terminated</span>
<span style="position:absolute;left:433.94px;top:100px;white-space:nowrap;font-family:'Liberation Sans',sans-serif;font-size:11px;font-weight:normal;line-height:11px;letter-spacing:0.306px;color:#a0a0a0;transform:scaleX(1.0571);transform-origin:0 0;-webkit-text-stroke:0.15px currentColor">Departed w/ balance</span>
<span style="position:absolute;left:6.95px;top:157px;white-space:nowrap;font-family:'Liberation Sans',sans-serif;font-size:11px;font-weight:bold;line-height:11px;letter-spacing:0.308px;color:#000;transform:scaleX(1.0643);transform-origin:0 0;-webkit-text-stroke:0.3px currentColor">General</span>
<span style="position:absolute;left:62.95px;top:157px;white-space:nowrap;font-family:'Liberation Sans',sans-serif;font-size:11px;font-weight:bold;line-height:11px;letter-spacing:0.392px;color:#def04e;transform:scaleX(1.0415);transform-origin:0 0;-webkit-text-stroke:0.3px currentColor">History</span>
<span style="position:absolute;left:116.95px;top:157px;white-space:nowrap;font-family:'Liberation Sans',sans-serif;font-size:11px;font-weight:bold;line-height:11px;letter-spacing:0.407px;color:#def04e;transform:scaleX(1.0643);transform-origin:0 0;-webkit-text-stroke:0.3px currentColor">Portrait</span>
<span style="position:absolute;left:172.95px;top:157px;white-space:nowrap;font-family:'Liberation Sans',sans-serif;font-size:11px;font-weight:bold;line-height:11px;letter-spacing:0.385px;color:#def04e;transform:scaleX(1.0569);transform-origin:0 0;-webkit-text-stroke:0.3px currentColor">Transaction</span>
<span style="position:absolute;left:252.95px;top:157px;white-space:nowrap;font-family:'Liberation Sans',sans-serif;font-size:11px;font-weight:bold;line-height:11px;letter-spacing:0.261px;color:#def04e;transform:scaleX(1.0491);transform-origin:0 0;-webkit-text-stroke:0.3px currentColor">Collection</span>
<span style="position:absolute;left:321.95px;top:157px;white-space:nowrap;font-family:'Liberation Sans',sans-serif;font-size:11px;font-weight:bold;line-height:11px;letter-spacing:0.336px;color:#def04e;transform:scaleX(1.0519);transform-origin:0 0;-webkit-text-stroke:0.3px currentColor">Auto PAP</span>
<span style="position:absolute;left:387.95px;top:157px;white-space:nowrap;font-family:'Liberation Sans',sans-serif;font-size:11px;font-weight:bold;line-height:11px;letter-spacing:0.395px;color:#def04e;transform:scaleX(1.0603);transform-origin:0 0;-webkit-text-stroke:0.3px currentColor">Stop Payment</span>
<span style="position:absolute;left:481.95px;top:157px;white-space:nowrap;font-family:'Liberation Sans',sans-serif;font-size:11px;font-weight:bold;line-height:11px;letter-spacing:0.283px;color:#def04e;transform:scaleX(1.0250);transform-origin:0 0;-webkit-text-stroke:0.3px currentColor">Bank</span>
<span style="position:absolute;left:521.95px;top:157px;white-space:nowrap;font-family:'Liberation Sans',sans-serif;font-size:11px;font-weight:bold;line-height:11px;letter-spacing:0.95px;color:#def04e;transform:scaleX(1.1080);transform-origin:0 0;-webkit-text-stroke:0.3px currentColor">Item</span>
<span style="position:absolute;left:560.95px;top:157px;white-space:nowrap;font-family:'Liberation Sans',sans-serif;font-size:11px;font-weight:bold;line-height:11px;letter-spacing:0.225px;color:#def04e;transform:scaleX(1.0386);transform-origin:0 0;-webkit-text-stroke:0.3px currentColor">Cashing</span>
<span style="position:absolute;left:617.95px;top:157px;white-space:nowrap;font-family:'Liberation Sans',sans-serif;font-size:11px;font-weight:bold;line-height:11px;letter-spacing:0.481px;color:#def04e;transform:scaleX(1.0661);transform-origin:0 0;-webkit-text-stroke:0.3px currentColor">Insurance</span>
<span style="position:absolute;left:688.95px;top:157px;white-space:nowrap;font-family:'Liberation Sans',sans-serif;font-size:11px;font-weight:bold;line-height:11px;letter-spacing:0.338px;color:#def04e;transform:scaleX(1.0212);transform-origin:0 0;-webkit-text-stroke:0.3px currentColor">Agent</span>
<span style="position:absolute;left:733.95px;top:157px;white-space:nowrap;font-family:'Liberation Sans',sans-serif;font-size:11px;font-weight:bold;line-height:11px;letter-spacing:0.356px;color:#def04e;transform:scaleX(1.0482);transform-origin:0 0;-webkit-text-stroke:0.3px currentColor">Follow-Up</span>
<span style="position:absolute;left:803.95px;top:157px;white-space:nowrap;font-family:'Liberation Sans',sans-serif;font-size:11px;font-weight:bold;line-height:11px;letter-spacing:0.617px;color:#def04e;transform:scaleX(1.0654);transform-origin:0 0;-webkit-text-stroke:0.3px currentColor">Note</span>
<span style="position:absolute;left:842.95px;top:157px;white-space:nowrap;font-family:'Liberation Sans',sans-serif;font-size:11px;font-weight:bold;line-height:11px;letter-spacing:0.382px;color:#def04e;transform:scaleX(1.0534);transform-origin:0 0;-webkit-text-stroke:0.3px currentColor">File Attachment</span>
<span style="position:absolute;left:6.40px;top:184px;white-space:nowrap;font-family:'Liberation Sans',sans-serif;font-size:11px;font-weight:bold;line-height:11px;letter-spacing:0.56px;color:#111;transform:scaleX(1.0927);transform-origin:0 0;-webkit-text-stroke:0.3px currentColor">Balance (as of 2015-08-17)</span>
<span style="position:absolute;left:8.40px;top:240px;white-space:nowrap;font-family:'Liberation Sans',sans-serif;font-size:11px;font-weight:bold;line-height:11px;letter-spacing:0.4px;color:#111;transform:scaleX(1.0661);transform-origin:0 0;-webkit-text-stroke:0.3px currentColor">Future Transactions</span>
<span style="position:absolute;left:7.90px;top:297px;white-space:nowrap;font-family:'Liberation Sans',sans-serif;font-size:11px;font-weight:bold;line-height:11px;letter-spacing:0.488px;color:#111;transform:scaleX(1.0802);transform-origin:0 0;-webkit-text-stroke:0.3px currentColor">Breakdown of Rent Balance (as of 2015-08-17)</span>
<span style="position:absolute;left:6.30px;top:360px;white-space:nowrap;font-family:'Liberation Sans',sans-serif;font-size:11px;font-weight:bold;line-height:11px;letter-spacing:0.308px;color:#111;transform:scaleX(1.0370);transform-origin:0 0;-webkit-text-stroke:0.3px currentColor">Address</span>
<span style="position:absolute;left:6.30px;top:440px;white-space:nowrap;font-family:'Liberation Sans',sans-serif;font-size:11px;font-weight:bold;line-height:11px;letter-spacing:0.441px;color:#111;transform:scaleX(1.0687);transform-origin:0 0;-webkit-text-stroke:0.3px currentColor">Phone Number</span>
<span style="position:absolute;left:6.20px;top:590px;white-space:nowrap;font-family:'Liberation Sans',sans-serif;font-size:11px;font-weight:bold;line-height:11px;letter-spacing:0.319px;color:#111;transform:scaleX(1.0531);transform-origin:0 0;-webkit-text-stroke:0.3px currentColor">List of Occupants</span>
<span style="position:absolute;left:403.96px;top:203px;white-space:nowrap;font-family:'Liberation Sans',sans-serif;font-size:11px;font-weight:normal;line-height:11px;letter-spacing:0.264px;color:#111;transform:scaleX(1.0412);transform-origin:0 0;-webkit-text-stroke:0.15px currentColor">Rent Balance</span>
<span style="position:absolute;left:505.30px;top:202px;white-space:nowrap;font-family:'Liberation Sans',sans-serif;font-size:11px;font-weight:normal;line-height:11px;letter-spacing:0.321px;color:#a0a0a0;transform:scaleX(1.0556);transform-origin:0 0;-webkit-text-stroke:0.15px currentColor">3,484.00</span>
<span style="position:absolute;left:596.14px;top:203px;white-space:nowrap;font-family:'Liberation Sans',sans-serif;font-size:11px;font-weight:normal;line-height:11px;letter-spacing:0.386px;color:#111;transform:scaleX(1.0585);transform-origin:0 0;-webkit-text-stroke:0.15px currentColor">Balance (Other)</span>
<span style="position:absolute;left:737.70px;top:202px;white-space:nowrap;font-family:'Liberation Sans',sans-serif;font-size:11px;font-weight:normal;line-height:11px;letter-spacing:0.35px;color:#a0a0a0;transform:scaleX(1.0500);transform-origin:0 0;-webkit-text-stroke:0.15px currentColor">0.00</span>
<span style="position:absolute;left:803.70px;top:203px;white-space:nowrap;font-family:'Liberation Sans',sans-serif;font-size:11px;font-weight:normal;line-height:11px;letter-spacing:0.317px;color:#111;transform:scaleX(1.0514);transform-origin:0 0;-webkit-text-stroke:0.15px currentColor">Total Balance</span>
<span style="position:absolute;left:906.30px;top:202px;white-space:nowrap;font-family:'Liberation Sans',sans-serif;font-size:11px;font-weight:normal;line-height:11px;letter-spacing:0.321px;color:#a0a0a0;transform:scaleX(1.0556);transform-origin:0 0;-webkit-text-stroke:0.15px currentColor">3,484.00</span>
<span style="position:absolute;left:242.60px;top:260px;white-space:nowrap;font-family:'Liberation Sans',sans-serif;font-size:11px;font-weight:normal;line-height:11px;letter-spacing:0.275px;color:#111;transform:scaleX(1.0310);transform-origin:0 0;-webkit-text-stroke:0.15px currentColor">Cashing</span>
<span style="position:absolute;left:339.70px;top:260px;white-space:nowrap;font-family:'Liberation Sans',sans-serif;font-size:11px;font-weight:normal;line-height:11px;letter-spacing:0.35px;color:#a0a0a0;transform:scaleX(1.0500);transform-origin:0 0;-webkit-text-stroke:0.15px currentColor">0.00</span>
<span style="position:absolute;left:450.65px;top:260px;white-space:nowrap;font-family:'Liberation Sans',sans-serif;font-size:11px;font-weight:normal;line-height:11px;letter-spacing:0.183px;color:#111;transform:scaleX(1.0478);transform-origin:0 0;-webkit-text-stroke:0.15px currentColor">Rent</span>
<span style="position:absolute;left:505.30px;top:260px;white-space:nowrap;font-family:'Liberation Sans',sans-serif;font-size:11px;font-weight:normal;line-height:11px;letter-spacing:0.321px;color:#a0a0a0;transform:scaleX(1.0556);transform-origin:0 0;-webkit-text-stroke:0.15px currentColor">3,484.00</span>
<span style="position:absolute;left:654.20px;top:260px;white-space:nowrap;font-family:'Liberation Sans',sans-serif;font-size:11px;font-weight:normal;line-height:11px;letter-spacing:0.225px;color:#111;transform:scaleX(1.0276);transform-origin:0 0;-webkit-text-stroke:0.15px currentColor">Other</span>
<span style="position:absolute;left:737.70px;top:260px;white-space:nowrap;font-family:'Liberation Sans',sans-serif;font-size:11px;font-weight:normal;line-height:11px;letter-spacing:0.35px;color:#a0a0a0;transform:scaleX(1.0500);transform-origin:0 0;-webkit-text-stroke:0.15px currentColor">0.00</span>
<span style="position:absolute;left:850.00px;top:260px;white-space:nowrap;font-family:'Liberation Sans',sans-serif;font-size:11px;font-weight:normal;line-height:11px;letter-spacing:0.538px;color:#111;transform:scaleX(1.0920);transform-origin:0 0;-webkit-text-stroke:0.15px currentColor">Total</span>
<span style="position:absolute;left:906.30px;top:260px;white-space:nowrap;font-family:'Liberation Sans',sans-serif;font-size:11px;font-weight:normal;line-height:11px;letter-spacing:0.321px;color:#a0a0a0;transform:scaleX(1.0556);transform-origin:0 0;-webkit-text-stroke:0.15px currentColor">3,484.00</span>
<span style="position:absolute;left:44.70px;top:321px;white-space:nowrap;font-family:'Liberation Sans',sans-serif;font-size:11px;font-weight:normal;line-height:11px;letter-spacing:0.379px;color:#111;transform:scaleX(1.0547);transform-origin:0 0;-webkit-text-stroke:0.15px currentColor">Current Month</span>
<span style="position:absolute;left:170.10px;top:321px;white-space:nowrap;font-family:'Liberation Sans',sans-serif;font-size:11px;font-weight:normal;line-height:11px;letter-spacing:0.337px;color:#a0a0a0;transform:scaleX(1.0586);transform-origin:0 0;-webkit-text-stroke:0.15px currentColor">30.00</span>
<span style="position:absolute;left:279.20px;top:315px;white-space:nowrap;font-family:'Liberation Sans',sans-serif;font-size:11px;font-weight:normal;line-height:11px;letter-spacing:0.0px;color:#111;transform:scaleX(1.0000);transform-origin:0 0;-webkit-text-stroke:0.15px currentColor">1</span>
<span style="position:absolute;left:251.36px;top:328px;white-space:nowrap;font-family:'Liberation Sans',sans-serif;font-size:11px;font-weight:normal;line-height:11px;letter-spacing:0.55px;color:#111;transform:scaleX(1.0437);transform-origin:0 0;-webkit-text-stroke:0.15px currentColor">Month</span>
<span style="position:absolute;left:339.70px;top:321px;white-space:nowrap;font-family:'Liberation Sans',sans-serif;font-size:11px;font-weight:normal;line-height:11px;letter-spacing:0.35px;color:#a0a0a0;transform:scaleX(1.0500);transform-origin:0 0;-webkit-text-stroke:0.15px currentColor">0.00</span>
<span style="position:absolute;left:426.40px;top:321px;white-space:nowrap;font-family:'Liberation Sans',sans-serif;font-size:11px;font-weight:normal;line-height:11px;letter-spacing:0.364px;color:#111;transform:scaleX(1.0437);transform-origin:0 0;-webkit-text-stroke:0.15px currentColor">2 Months</span>
<span style="position:absolute;left:529.70px;top:321px;white-space:nowrap;font-family:'Liberation Sans',sans-serif;font-size:11px;font-weight:normal;line-height:11px;letter-spacing:0.35px;color:#a0a0a0;transform:scaleX(1.0500);transform-origin:0 0;-webkit-text-stroke:0.15px currentColor">0.00</span>
<span style="position:absolute;left:606.30px;top:321px;white-space:nowrap;font-family:'Liberation Sans',sans-serif;font-size:11px;font-weight:normal;line-height:11px;letter-spacing:0.4px;color:#111;transform:scaleX(1.0778);transform-origin:0 0;-webkit-text-stroke:0.15px currentColor">3 Months or +</span>
<span style="position:absolute;left:712.50px;top:321px;white-space:nowrap;font-family:'Liberation Sans',sans-serif;font-size:11px;font-weight:normal;line-height:11px;letter-spacing:0.379px;color:#a0a0a0;transform:scaleX(1.0733);transform-origin:0 0;-webkit-text-stroke:0.15px currentColor">3,454.00</span>
<span style="position:absolute;left:850.00px;top:321px;white-space:nowrap;font-family:'Liberation Sans',sans-serif;font-size:11px;font-weight:normal;line-height:11px;letter-spacing:0.538px;color:#111;transform:scaleX(1.0920);transform-origin:0 0;-webkit-text-stroke:0.15px currentColor">Total</span>
<span style="position:absolute;left:906.30px;top:321px;white-space:nowrap;font-family:'Liberation Sans',sans-serif;font-size:11px;font-weight:normal;line-height:11px;letter-spacing:0.321px;color:#a0a0a0;transform:scaleX(1.0556);transform-origin:0 0;-webkit-text-stroke:0.15px currentColor">3,484.00</span>
<span style="position:absolute;left:44.25px;top:457px;white-space:nowrap;font-family:'Liberation Sans',sans-serif;font-size:11px;font-weight:bold;line-height:11px;letter-spacing:0.817px;color:#111;transform:scaleX(1.1074);transform-origin:0 0;-webkit-text-stroke:0.3px currentColor">Type</span>
<span style="position:absolute;left:134.75px;top:457px;white-space:nowrap;font-family:'Liberation Sans',sans-serif;font-size:11px;font-weight:bold;line-height:11px;letter-spacing:0.417px;color:#111;transform:scaleX(1.0517);transform-origin:0 0;-webkit-text-stroke:0.3px currentColor">Code</span>
<span style="position:absolute;left:211.65px;top:457px;white-space:nowrap;font-family:'Liberation Sans',sans-serif;font-size:11px;font-weight:bold;line-height:11px;letter-spacing:0.71px;color:#111;transform:scaleX(1.0911);transform-origin:0 0;-webkit-text-stroke:0.3px currentColor">Number</span>
<span style="position:absolute;left:314.80px;top:457px;white-space:nowrap;font-family:'Liberation Sans',sans-serif;font-size:11px;font-weight:bold;line-height:11px;letter-spacing:0.767px;color:#111;transform:scaleX(1.1238);transform-origin:0 0;-webkit-text-stroke:0.3px currentColor">ext.</span>
<span style="position:absolute;left:386.50px;top:457px;white-space:nowrap;font-family:'Liberation Sans',sans-serif;font-size:11px;font-weight:bold;line-height:11px;letter-spacing:0.7px;color:#111;transform:scaleX(1.0364);transform-origin:0 0;-webkit-text-stroke:0.3px currentColor">Day</span>
<span style="position:absolute;left:429.00px;top:457px;white-space:nowrap;font-family:'Liberation Sans',sans-serif;font-size:11px;font-weight:bold;line-height:11px;letter-spacing:0.6px;color:#111;transform:scaleX(1.0696);transform-origin:0 0;-webkit-text-stroke:0.3px currentColor">Evening</span>
<span style="position:absolute;left:677.60px;top:457px;white-space:nowrap;font-family:'Liberation Sans',sans-serif;font-size:11px;font-weight:bold;line-height:11px;letter-spacing:0.6px;color:#111;transform:scaleX(1.0582);transform-origin:0 0;-webkit-text-stroke:0.3px currentColor">Comment</span>
<span style="position:absolute;left:12.98px;top:479px;white-space:nowrap;font-family:'Liberation Sans',sans-serif;font-size:11px;font-weight:normal;line-height:11px;letter-spacing:0.45px;color:#111;transform:scaleX(1.0233);transform-origin:0 0;-webkit-text-stroke:0.15px currentColor">Home</span>
<span style="position:absolute;left:118.00px;top:479px;white-space:nowrap;font-family:'Liberation Sans',sans-serif;font-size:11px;font-weight:normal;line-height:11px;letter-spacing:0.55px;color:#111;transform:scaleX(1.0632);transform-origin:0 0;-webkit-text-stroke:0.15px currentColor">418</span>
<span style="position:absolute;left:12.98px;top:504px;white-space:nowrap;font-family:'Liberation Sans',sans-serif;font-size:11px;font-weight:normal;line-height:11px;letter-spacing:0.45px;color:#111;transform:scaleX(1.0233);transform-origin:0 0;-webkit-text-stroke:0.15px currentColor">Home</span>
<span style="position:absolute;left:118.00px;top:504px;white-space:nowrap;font-family:'Liberation Sans',sans-serif;font-size:11px;font-weight:normal;line-height:11px;letter-spacing:0.55px;color:#111;transform:scaleX(1.0632);transform-origin:0 0;-webkit-text-stroke:0.15px currentColor">418</span>
<span style="position:absolute;left:12.98px;top:529px;white-space:nowrap;font-family:'Liberation Sans',sans-serif;font-size:11px;font-weight:normal;line-height:11px;letter-spacing:0.45px;color:#111;transform:scaleX(1.0233);transform-origin:0 0;-webkit-text-stroke:0.15px currentColor">Home</span>
<span style="position:absolute;left:118.00px;top:529px;white-space:nowrap;font-family:'Liberation Sans',sans-serif;font-size:11px;font-weight:normal;line-height:11px;letter-spacing:0.55px;color:#111;transform:scaleX(1.0632);transform-origin:0 0;-webkit-text-stroke:0.15px currentColor">418</span>
<span style="position:absolute;left:12.98px;top:554px;white-space:nowrap;font-family:'Liberation Sans',sans-serif;font-size:11px;font-weight:normal;line-height:11px;letter-spacing:0.45px;color:#111;transform:scaleX(1.0233);transform-origin:0 0;-webkit-text-stroke:0.15px currentColor">Home</span>
<span style="position:absolute;left:118.00px;top:554px;white-space:nowrap;font-family:'Liberation Sans',sans-serif;font-size:11px;font-weight:normal;line-height:11px;letter-spacing:0.55px;color:#111;transform:scaleX(1.0632);transform-origin:0 0;-webkit-text-stroke:0.15px currentColor">418</span>
<span style="position:absolute;left:211.60px;top:614px;white-space:nowrap;font-family:'Liberation Sans',sans-serif;font-size:11px;font-weight:bold;line-height:11px;letter-spacing:0.517px;color:#1c7282;transform:scaleX(1.0711);transform-origin:0 0;-webkit-text-stroke:0.3px currentColor">Occupant Name</span>
<span style="position:absolute;left:629.10px;top:614px;white-space:nowrap;font-family:'Liberation Sans',sans-serif;font-size:11px;font-weight:bold;line-height:11px;letter-spacing:0.442px;color:#1c7282;transform:scaleX(1.0535);transform-origin:0 0;-webkit-text-stroke:0.3px currentColor">Kinship</span>
<span style="position:absolute;left:814.30px;top:614px;white-space:nowrap;font-family:'Liberation Sans',sans-serif;font-size:11px;font-weight:bold;line-height:11px;letter-spacing:0.575px;color:#1c7282;transform:scaleX(1.0571);transform-origin:0 0;-webkit-text-stroke:0.3px currentColor">Birth</span>
<span style="position:absolute;left:906.60px;top:614px;white-space:nowrap;font-family:'Liberation Sans',sans-serif;font-size:11px;font-weight:bold;line-height:11px;letter-spacing:0.542px;color:#1c7282;transform:scaleX(1.0795);transform-origin:0 0;-webkit-text-stroke:0.3px currentColor">Present</span>
<span style="position:absolute;left:9.30px;top:636px;white-space:nowrap;font-family:'Liberation Sans',sans-serif;font-size:11px;font-weight:normal;line-height:11px;letter-spacing:0.275px;color:#111;transform:scaleX(1.0536);transform-origin:0 0;-webkit-text-stroke:0.15px currentColor">Aculiak, Juani Johnny</span>
<span style="position:absolute;left:529.15px;top:636px;white-space:nowrap;font-family:'Liberation Sans',sans-serif;font-size:11px;font-weight:normal;line-height:11px;letter-spacing:0.35px;color:#111;transform:scaleX(1.0536);transform-origin:0 0;-webkit-text-stroke:0.15px currentColor">Head of household</span>
<span style="position:absolute;left:778.62px;top:636px;white-space:nowrap;font-family:'Liberation Sans',sans-serif;font-size:11px;font-weight:normal;line-height:11px;letter-spacing:0.528px;color:#111;transform:scaleX(1.0750);transform-origin:0 0;-webkit-text-stroke:0.15px currentColor">1900-01-01</span>
<span style="position:absolute;left:648.00px;top:5px;white-space:nowrap;font-family:'Liberation Sans',sans-serif;font-size:11px;font-weight:normal;line-height:11px;letter-spacing:0.0px;color:#000;transform:scaleX(1.0000);transform-origin:0 0;-webkit-text-stroke:0.15px currentColor">0</span>
<span style="position:absolute;left:687.00px;top:5px;white-space:nowrap;font-family:'Liberation Sans',sans-serif;font-size:11px;font-weight:normal;line-height:11px;letter-spacing:0.0px;color:#000;transform:scaleX(1.0000);transform-origin:0 0;-webkit-text-stroke:0.15px currentColor">0</span>
<span style="position:absolute;left:727.00px;top:5px;white-space:nowrap;font-family:'Liberation Sans',sans-serif;font-size:11px;font-weight:normal;line-height:11px;letter-spacing:0.0px;color:#000;transform:scaleX(1.0000);transform-origin:0 0;-webkit-text-stroke:0.15px currentColor">0</span>
</body></html>
